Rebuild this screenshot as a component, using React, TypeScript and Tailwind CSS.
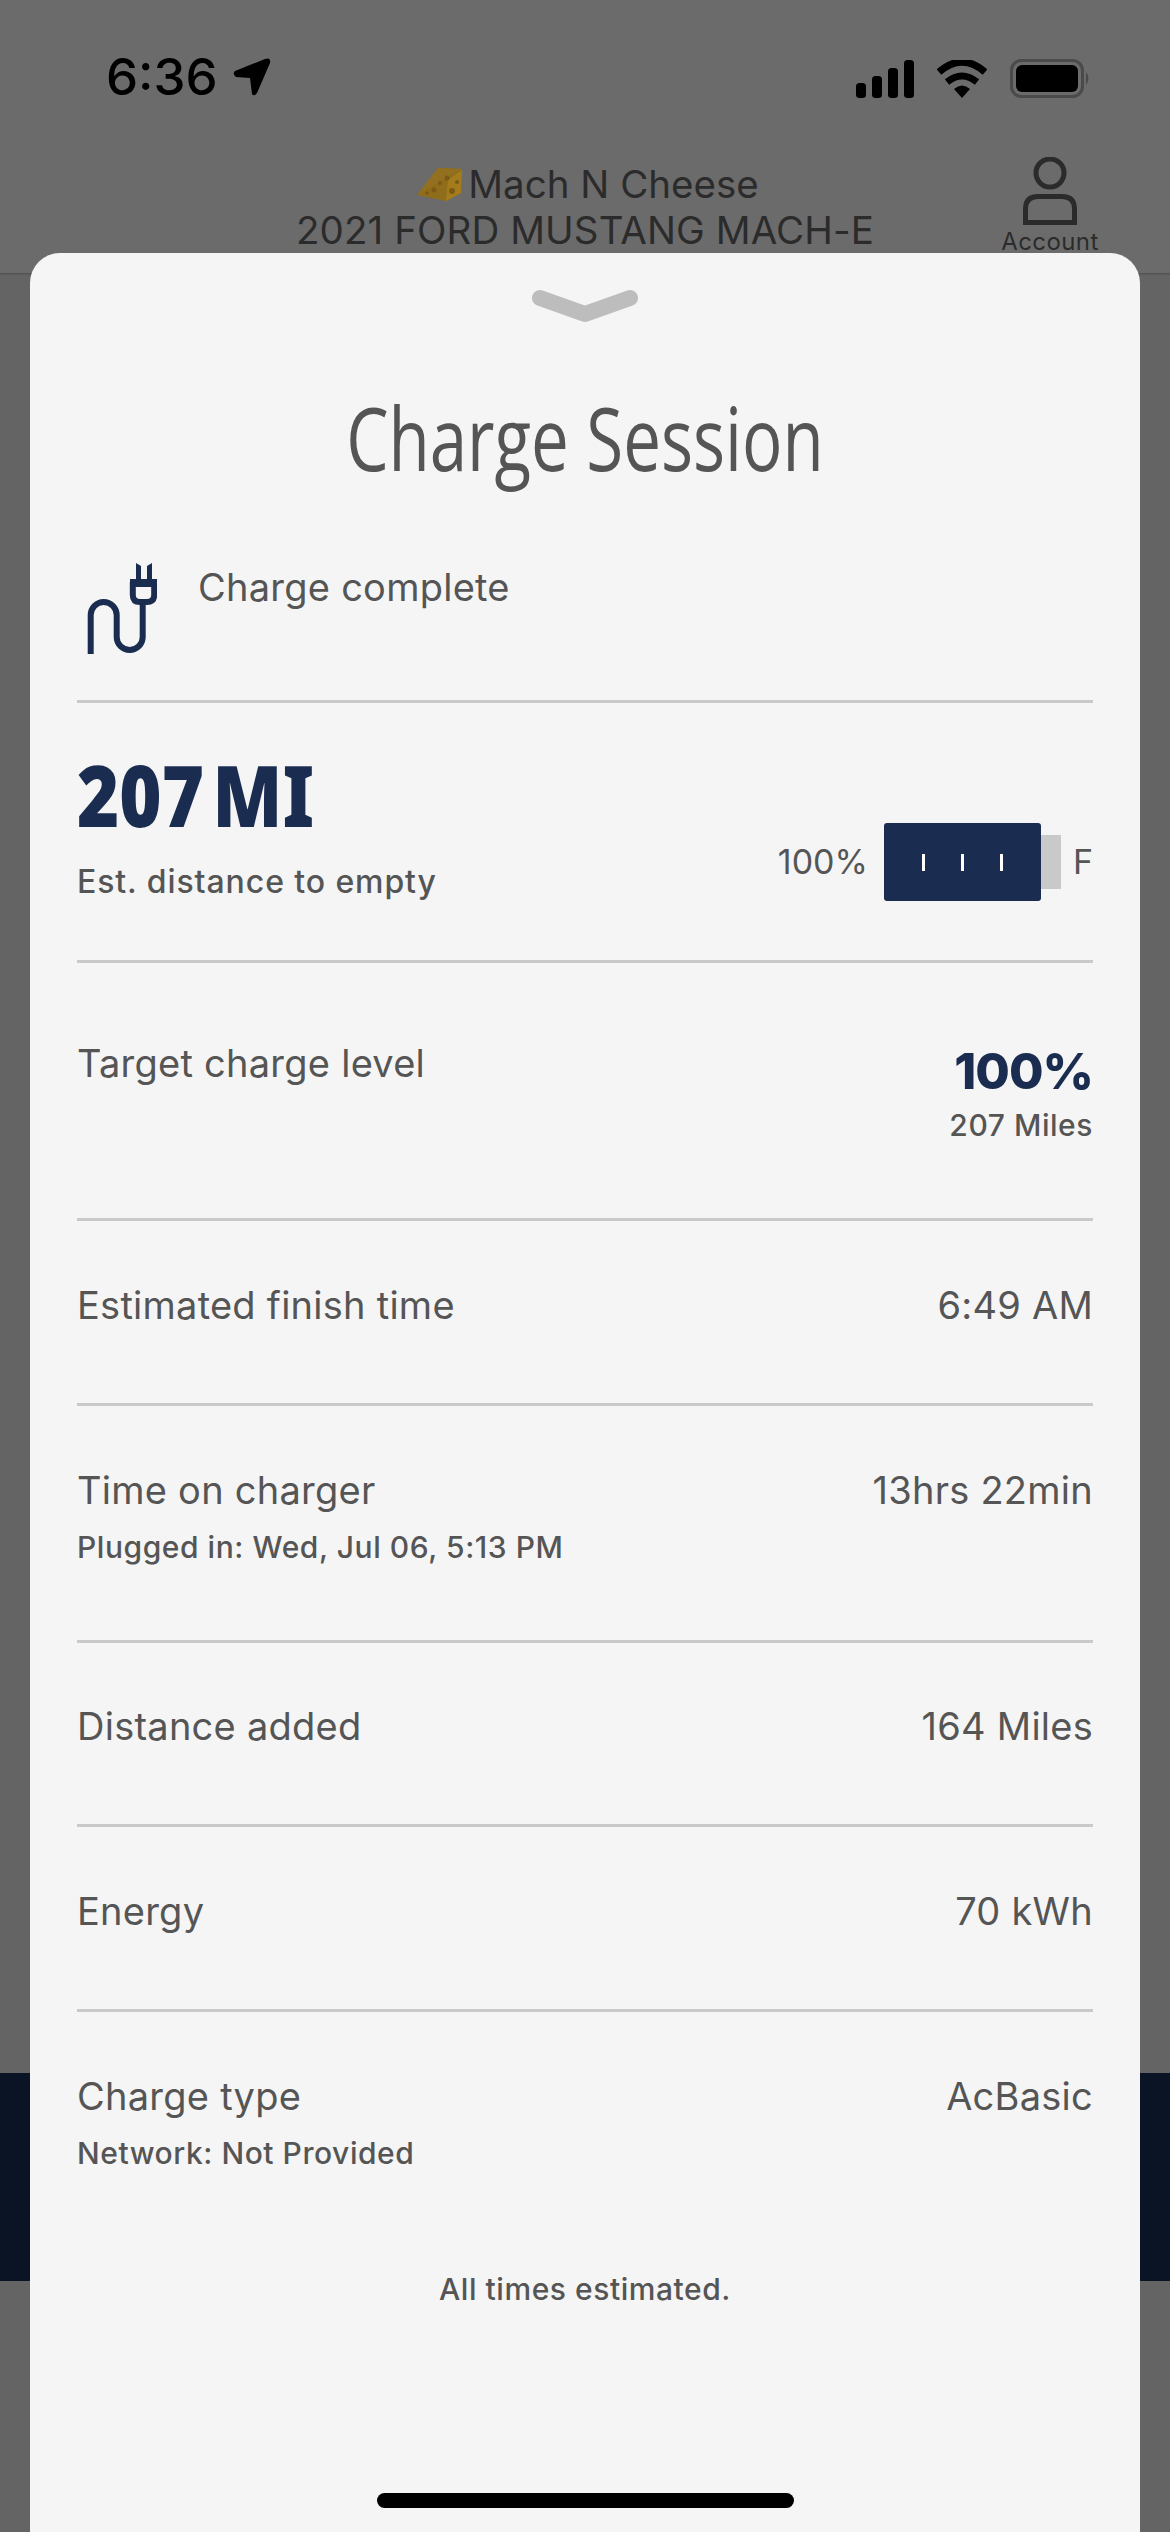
import React from "react";

const inter = "font-['Inter','Noto_Sans',sans-serif]";
const main = "text-[38px] leading-[46px] tracking-[0.25px] text-[#555555]";
const small = "text-[30px] font-medium leading-[46px] tracking-[0.55px] text-[#555555]";

function Row({ h, label, sub, value, valueSub }: { h: string; label: string; sub?: string; value: React.ReactNode; valueSub?: string }) {
  return (
    <div className={`${h} flex justify-between border-b-[3px] border-[#c9c9c9]`}>
      <div className="flex flex-col">
        <span className={main}>{label}</span>
        {sub && <span className={`mt-[11px] ${small}`}>{sub}</span>}
      </div>
      <div className="flex flex-col items-end">
        {value}
        {valueSub && <span className={`mt-[0px] ${small}`}>{valueSub}</span>}
      </div>
    </div>
  );
}

const val = (t: string) => <span className={main}>{t}</span>;

function Cheese() {
  return (
    <svg width="48" height="36" viewBox="0 0 48 36" className="shrink-0">
      <path d="M1 29 L22 2 L46 3 L45 27 L30 35 Z" fill="#8f6d1a" />
      <path d="M1 29 L22 2 L46 3 L30 12 Z" fill="#93701f" />
      <path d="M1 29 L30 35 L32 14 L46 4 L45 27 L30 35" fill="#a57c1c" />
      <circle cx="18" cy="24" r="2.5" fill="#7a5a14" />
      <circle cx="31" cy="12" r="2.5" fill="#7a5a14" />
      <circle cx="36" cy="25" r="3" fill="#7a5a14" />
      <circle cx="24" cy="17" r="2" fill="#7a5a14" />
      <circle cx="41" cy="16" r="2" fill="#7a5a14" />
      <circle cx="11" cy="27" r="1.8" fill="#7a5a14" />
    </svg>
  );
}

export default function App() {
  return (
    <div className={`relative h-[2532px] w-[1170px] overflow-hidden bg-[#646464] ${inter}`}>
      {/* Dimmed page behind the sheet */}
      <div className="flex h-[273px] flex-col bg-[#6b6b6b] shadow-[0_1px_2px_rgba(0,0,0,0.25)]">
        <div className="flex h-[142px] items-start justify-between pl-[106px] pr-[78px] pt-[44px]">
          <div className="flex items-center gap-[15px]">
            <span className="text-[51px] font-medium leading-[66px] text-black">6:36</span>
            <svg width="38" height="38" viewBox="0 0 38 38">
              <path d="M2 13 L32 1 Q38 -1 37 5 L24 35 Q21 39 19 36 L17 20 L3 19 Q-1 16 2 13 Z" fill="#000" />
            </svg>
          </div>
          <div className="mt-[15px] flex items-center gap-[21px]">
            <svg width="60" height="38" viewBox="0 0 60 38">
              <rect x="0" y="23" width="10" height="15" rx="3.5" fill="#000" />
              <rect x="16" y="16" width="10" height="22" rx="3.5" fill="#000" />
              <rect x="32" y="8" width="10" height="30" rx="3.5" fill="#000" />
              <rect x="48" y="0" width="10" height="38" rx="3.5" fill="#000" />
            </svg>
            <svg width="50" height="38" viewBox="0 0 50 38">
              <path d="M2 12 Q25 -8 48 12" stroke="#000" strokeWidth="7" fill="none" />
              <path d="M10 22 Q25 10 40 22" stroke="#000" strokeWidth="7" fill="none" />
              <path d="M17 29 Q25 22 33 29 L25 38 Z" fill="#000" />
            </svg>
            <svg width="82" height="40" className="ml-[2px]" viewBox="0 0 82 40">
              <rect x="1.5" y="1.5" width="71" height="36" rx="10" fill="none" stroke="#4a4a4a" strokeWidth="3" />
              <rect x="6" y="6" width="62" height="27" rx="6" fill="#000" />
              <path d="M76 13 Q81 19 76 26 Z" fill="#4a4a4a" />
            </svg>
          </div>
        </div>
        <div className="relative flex flex-col items-center pt-[19px] text-[#2b2b2b]">
          <div className="flex items-center gap-[4px] pl-[5px] text-[38.5px] leading-[46px]">
            <Cheese />
            <span>Mach N Cheese</span>
          </div>
          <span className="text-[38.5px] leading-[46px] tracking-[0.1px]">2021 FORD MUSTANG MACH-E</span>
          <div className="absolute left-[990px] top-[15px] flex w-[120px] flex-col items-center">
            <svg width="56" height="68" viewBox="0 0 56 68" fill="none" stroke="#2b2b2b" strokeWidth="5">
              <circle cx="28" cy="16" r="14" />
              <path d="M3.5 65.5 V52 Q3.5 39.5 16 39.5 H40 Q52.5 39.5 52.5 52 V65.5 Z" />
            </svg>
            <span className="mt-[3px] text-[24px] leading-[28px] tracking-[0.4px]">Account</span>
          </div>
        </div>
      </div>
      <div className="mt-[1800px] h-[208px] bg-[#0a1424]" />

      {/* Sheet */}
      <div className="absolute left-[30px] top-[253px] h-[2279px] w-[1110px] rounded-t-[30px] bg-[#f5f5f5] px-[47px]">
        <div className="flex h-[32px] justify-center pt-[36px]">
          <svg width="108" height="34" viewBox="0 0 108 34" className="shrink-0">
            <path d="M9 9 L54 25 L99 9" stroke="#bdbdbd" strokeWidth="16" strokeLinecap="round" strokeLinejoin="round" fill="none" />
          </svg>
        </div>
        <div className="flex h-[230px] items-center justify-center pt-[66px]">
          <span className="scale-x-[0.773] whitespace-nowrap font-['Open_Sans',sans-serif] text-[87px] font-normal leading-[90px] text-[#555555]">Charge Session</span>
        </div>

        <div className="mt-[43px] flex h-[141px] gap-[41px] border-b-[3px] border-[#c9c9c9]">
          <svg width="70" height="92" viewBox="0 0 70 92" fill="none" stroke="#1a2d50" strokeWidth="6" className="ml-[10px] shrink-0">
            <path d="M3.7 92 V53 A13 13 0 0 1 29.7 53 V75 A13 13 0 0 0 55.7 75 V42" />
            <path d="M45.8 20 V33 Q45.8 40 53 40 H60 Q67.2 40 67.2 33 V20" />
            <rect x="43" y="17" width="27" height="8" fill="#1a2d50" stroke="none" />
            <path d="M49 1 L54 4 V18 H49 Z M65 1 L60 4 V18 H65 Z" fill="#1a2d50" stroke="none" />
          </svg>
          <span className={`mt-[2px] ${main}`}>Charge complete</span>
        </div>

        <div className="flex h-[260px] items-start justify-between border-b-[3px] border-[#c9c9c9] pt-[46px]">
          <div className="flex flex-col">
            <span className="origin-left scale-x-[0.85] whitespace-nowrap font-['Noto_Sans',sans-serif] text-[85px] font-black leading-[90px] text-[#1a2d50] [word-spacing:-12px]">207 MI</span>
            <span className="mt-[20px] text-[32px] font-medium leading-[46px] tracking-[0.9px] text-[#555555]">Est. distance to empty</span>
          </div>
          <div className="mt-[74px] flex items-center">
            <span className="mr-[16px] text-[34px] leading-[46px] text-[#555555]">100%</span>
            <div className="flex h-[78px] w-[157px] items-center justify-center gap-[36px] rounded-[3px] bg-[#1a2d50]">
              <span className="h-[17px] w-[3px] bg-white" />
              <span className="h-[17px] w-[3px] bg-white" />
              <span className="h-[17px] w-[3px] bg-white" />
            </div>
            <span className="h-[54px] w-[20px] bg-[#c9c9c9]" />
            <span className="ml-[12px] text-[34px] leading-[46px] text-[#555555]">F</span>
          </div>
        </div>

        <div>
          <Row
            h="h-[258px] pt-[77px]"
            label="Target charge level"
            value={<span className="text-[50px] font-extrabold leading-[62px] tracking-[-1px] text-[#1a2d50]">100%</span>}
            valueSub="207 Miles"
          />
          <Row h="h-[185px] pt-[61px]" label="Estimated finish time" value={val("6:49 AM")} />
          <Row h="h-[237px] pt-[61px]" label="Time on charger" sub="Plugged in: Wed, Jul 06, 5:13 PM" value={val("13hrs 22min")} />
          <Row h="h-[184px] pt-[60px]" label="Distance added" value={val("164 Miles")} />
          <Row h="h-[185px] pt-[61px]" label="Energy" value={val("70 kWh")} />
          <div className="flex justify-between pt-[61px]">
            <div className="flex flex-col">
              <span className={main}>Charge type</span>
              <span className={`mt-[11px] ${small}`}>Network: Not Provided</span>
            </div>
            {val("AcBasic")}
          </div>
          <p className={`mt-[90px] text-center ${small}`}>All times estimated.</p>
        </div>
      </div>

      {/* Home indicator */}
      <div className="absolute bottom-[24px] left-[377px] h-[15px] w-[417px] rounded-full bg-black" />
    </div>
  );
}
